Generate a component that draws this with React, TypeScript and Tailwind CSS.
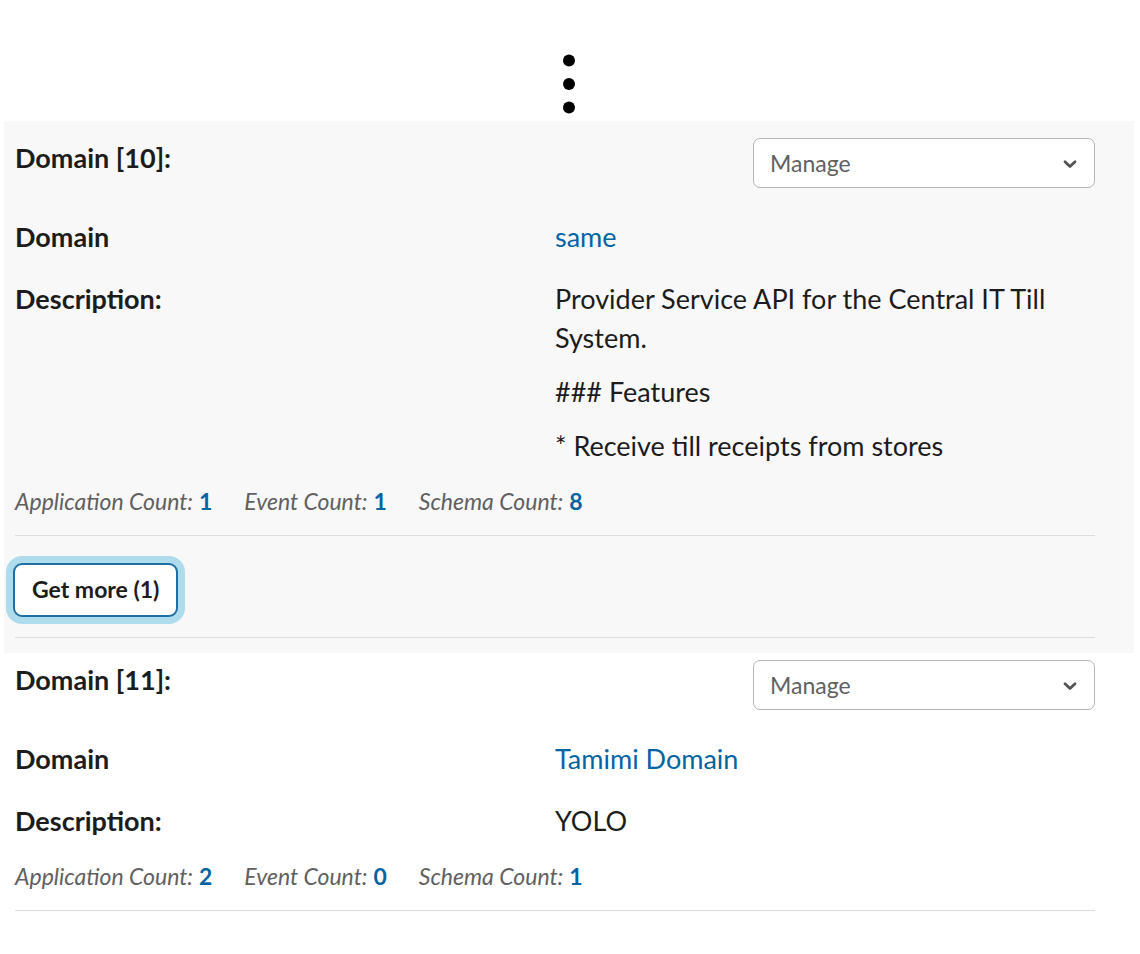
import type { ReactNode } from "react";

type Domain = {
  index: number;
  name: string;
  description: string[];
  applications: number;
  events: number;
  schemas: number;
};

const domains: Domain[] = [
  {
    index: 10,
    name: "same",
    description: [
      "Provider Service API for the Central IT Till System.",
      "### Features",
      "* Receive till receipts from stores",
    ],
    applications: 1,
    events: 1,
    schemas: 8,
  },
  {
    index: 11,
    name: "Tamimi Domain",
    description: ["YOLO"],
    applications: 2,
    events: 0,
    schemas: 1,
  },
];

function ManageSelect({ id }: { id: string }) {
  return (
    <div className="relative ml-auto w-[342px] max-w-full">
      <select
        id={id}
        aria-label="Manage domain"
        className="block h-[50px] w-full appearance-none rounded-[7px] border border-[#b5b5b5] bg-white pr-12 pl-4 text-[23px] leading-9 text-[#616061]"
      >
        <option>Manage</option>
      </select>
      <svg
        viewBox="0 0 14 10"
        className="pointer-events-none absolute top-[21px] right-[18px] h-[10px] w-[14px]"
        fill="none"
        stroke="#555455"
        strokeWidth="2.8"
        strokeLinecap="round"
        strokeLinejoin="round"
        aria-hidden="true"
      >
        <path d="M2 2.8 L7 7.6 L12 2.8" />
      </svg>
    </div>
  );
}

function Count({ label, value }: { label: string; value: number }) {
  return (
    <span>
      <em>{label}:</em> <a href="#" className="font-bold text-[#0264a2]">{value}</a>
    </span>
  );
}

function DomainCard({ domain, children }: { domain: Domain; children?: ReactNode }) {
  return (
    <div>
      <div className="grid grid-cols-2">
        <h2 className="font-bold">Domain [{domain.index}]:</h2>
        <ManageSelect id={`manage-${domain.index}`} />
      </div>
      <dl className="mt-[29px] grid grid-cols-2 gap-y-[23px]">
        <dt className="font-bold">Domain</dt>
        <dd>
          <a href="#" className="text-[#0264a2]">{domain.name}</a>
        </dd>
        <dt className="font-bold">Description:</dt>
        <dd className="flex flex-col gap-[15px]">
          {domain.description.map((line) => (
            <p key={line}>{line}</p>
          ))}
        </dd>
      </dl>
      <div className="mt-[18px] flex flex-wrap gap-x-8 border-b border-[#dddddd] pb-4 text-[23px] leading-9 text-[#616061]">
        <Count label="Application Count" value={domain.applications} />
        <Count label="Event Count" value={domain.events} />
        <Count label="Schema Count" value={domain.schemas} />
      </div>
      {children}
    </div>
  );
}

export default function App() {
  return (
    <main className="min-h-screen bg-white pr-[6px] pl-1 font-['Lato',sans-serif] text-[27px] leading-[39px] text-[#1d1c1d]">
      <div className="flex h-[121px] flex-col items-center justify-end pb-[7px]">
        <svg viewBox="0 0 12 61" className="h-[61px] w-3" fill="#000000" aria-hidden="true">
          <circle cx="6" cy="7.5" r="6" />
          <circle cx="6" cy="31" r="6" />
          <circle cx="6" cy="54.5" r="6" />
        </svg>
      </div>
      <section className="bg-[#f8f8f8] pt-[17px] pr-[39px] pb-[15px] pl-[11px]">
        <DomainCard domain={domains[0]}>
          <div className="border-b border-[#dddddd] pt-[27px] pb-5">
            <button
              type="button"
              className="-ml-[2px] block h-[54px] rounded-[9px] border-2 border-[#1f6fa5] bg-white px-[17px] pb-[2px] text-[23px] leading-9 font-bold shadow-[0_0_0_7px_#aedcec]"
            >
              Get more (1)
            </button>
          </div>
        </DomainCard>
      </section>
      <section className="pt-[7px] pr-[39px] pl-[11px]">
        <DomainCard domain={domains[1]} />
      </section>
    </main>
  );
}
